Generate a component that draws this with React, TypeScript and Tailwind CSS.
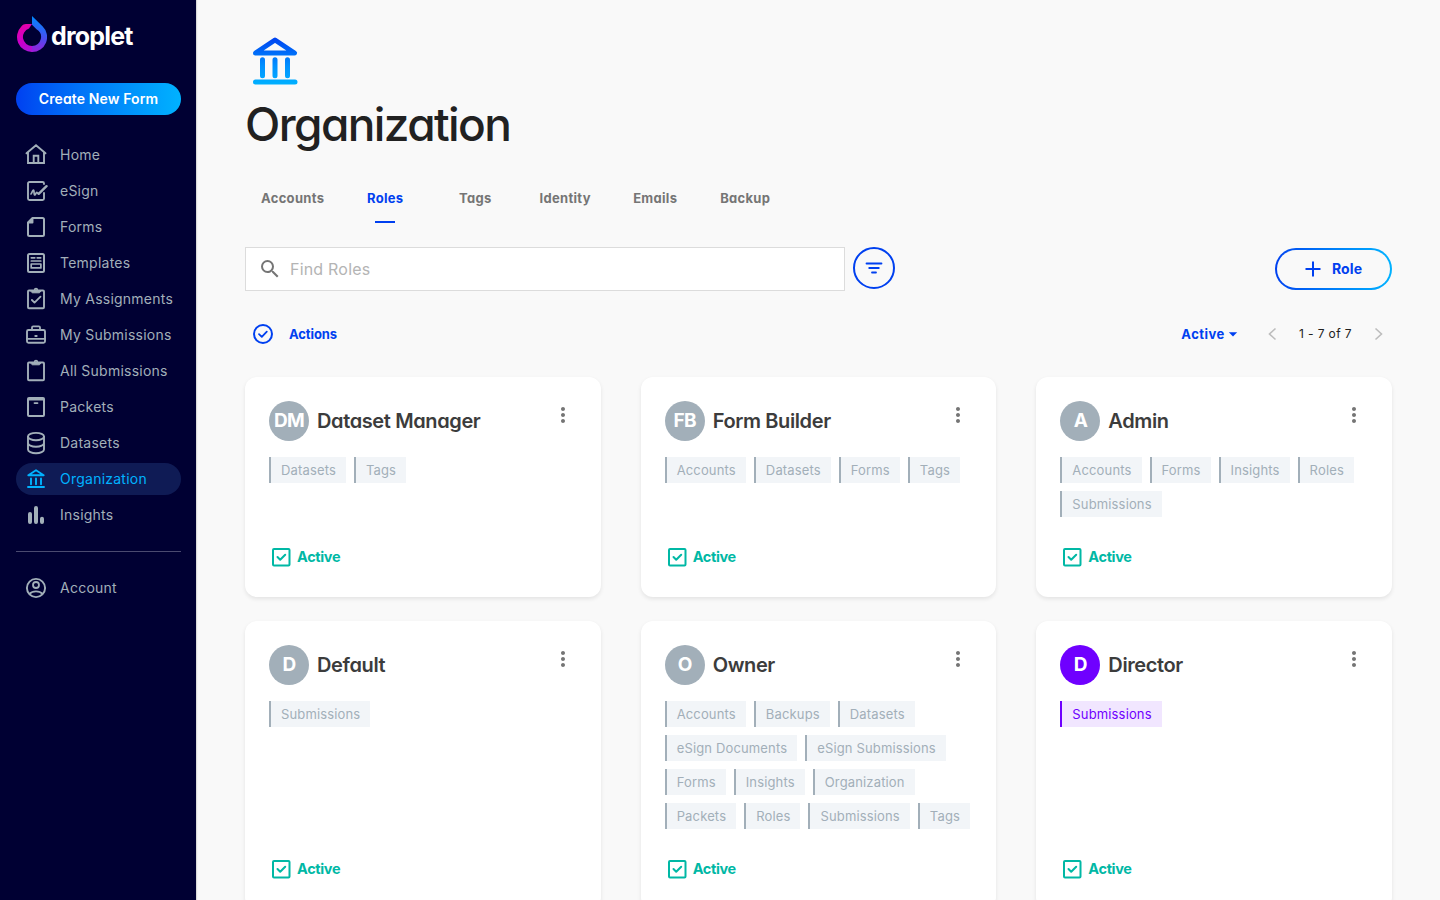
import type { ReactNode } from 'react';
import { MdSearch, MdArrowDropDown, MdMoreVert } from 'react-icons/md';

const geo = "[font-feature-settings:'cv11']";

function Icon({ children }: { children: ReactNode }) {
  return (
    <svg
      viewBox="0 0 24 24"
      className="size-6 shrink-0"
      fill="none"
      stroke="currentColor"
      strokeWidth="2"
      strokeLinecap="round"
      strokeLinejoin="round"
    >
      {children}
    </svg>
  );
}

const clipboard = (
  <>
    <rect x="4" y="3.500" width="16" height="17.800" rx="1" strokeWidth="1.900" />
    <path d="M7 3.800h10L15.500 5.800h-7z" fill="currentColor" strokeWidth="1" />
    <circle cx="12" cy="3" r="1.400" strokeWidth="1.600" />
  </>
);

const icons: Record<string, ReactNode> = {
  Home: (
    <path
      d="M2.500 10.300 12 2.300l9.500 8M4 9.300V20h16V9.300M9.700 20v-7.200h4.600V20"
      strokeWidth="1.900"
      strokeLinejoin="miter"
    />
  ),
  eSign: (
    <>
      <path d="M20 5V4.500A1.500 1.500 0 0 0 18.500 3h-13A1.500 1.500 0 0 0 4 4.500v15A1.500 1.500 0 0 0 5.500 21h13a1.500 1.500 0 0 0 1.500-1.500V14" strokeWidth="1.900" />
      <path d="M7 15c1-1 1.600-4 2.500-4s.2 5 1.200 5 1.200-2.600 2-2.600.6 1.400 1.800 1" strokeWidth="1.700" />
      <path d="M14.700 14.800 22.500 7.200" strokeWidth="2.400" />
    </>
  ),
  Forms: (
    <>
      <path d="M8.500 3h10A1.500 1.500 0 0 1 20 4.500v15a1.500 1.500 0 0 1-1.500 1.500h-13A1.500 1.500 0 0 1 4 19.500V7.500z" strokeWidth="2" />
      <path d="M4.800 7.500h3.700V3.800z" strokeWidth="1.900" />
    </>
  ),
  Templates: (
    <>
      <rect x="4" y="3" width="16" height="18" rx="1.500" strokeWidth="2" />
      <path d="M7.300 6.800h3.500M13.200 6.800h3.500M7.300 10h9.500" strokeWidth="1.700" />
      <rect x="7.200" y="13" width="9.700" height="3.900" strokeWidth="1.700" />
    </>
  ),
  'My Assignments': (
    <>
      {clipboard}
      <path d="m7.900 13 2.600 2.600 6-6" strokeWidth="1.800" />
    </>
  ),
  'My Submissions': (
    <>
      <rect x="3" y="7" width="18" height="12.800" rx="1.500" strokeWidth="1.900" />
      <path d="M8 7V4.500A1.200 1.200 0 0 1 9.200 3.300h5.600A1.200 1.200 0 0 1 16 4.500V7M3 15.800h18" strokeWidth="1.800" />
      <path d="M11.300 13h1.400" strokeWidth="1.900" />
    </>
  ),
  'All Submissions': clipboard,
  Packets: (
    <>
      <rect x="4" y="3" width="16" height="18" rx="1" strokeWidth="2" />
      <path d="M4.500 4.500h15" />
      <path d="M10.500 8.100h3" strokeWidth="1.800" />
    </>
  ),
  Datasets: (
    <>
      <ellipse cx="12" cy="5.600" rx="8" ry="3.700" strokeWidth="1.900" />
      <path
        d="M4 5.600v12.900c0 2.100 3.600 3.800 8 3.800s8-1.700 8-3.800V5.600M4 12c0 2 3.600 3.700 8 3.700s8-1.700 8-3.700"
        strokeWidth="1.900"
      />
    </>
  ),
  Organization: (
    <path d="M4.300 8.200 12 3.300l7.700 4.900zM7 11.500v5.800M12 11.500v5.800M17 11.500v5.800M4 20h16" strokeWidth="1.900" />
  ),
  Insights: <path d="M6 11v8M12 5v14M18 15.700V19" strokeWidth="4" />,
  Account: (
    <>
      <circle cx="12" cy="12" r="9.100" strokeWidth="1.900" />
      <circle cx="12" cy="9" r="3" strokeWidth="1.800" />
      <path d="M5.800 17.600c1.300-1.500 3.500-2.300 6.200-2.300s4.900.8 6.200 2.300" strokeWidth="1.800" />
    </>
  ),
};

const nav = [
  'Home',
  'eSign',
  'Forms',
  'Templates',
  'My Assignments',
  'My Submissions',
  'All Submissions',
  'Packets',
  'Datasets',
  'Organization',
  'Insights',
];

function NavItem({ label, active }: { label: string; active?: boolean }) {
  return (
    <a
      className={`flex h-8 items-center gap-3 rounded-full pl-2 text-sm tracking-[0.24px] whitespace-nowrap ${
        active ? 'bg-[#0f1b55] text-[#00b2ff]' : 'text-[#a2afb9]'
      }`}
    >
      <Icon>{icons[label]}</Icon>
      {label}
    </a>
  );
}

function Logo() {
  return (
    <div className="flex h-9 items-center gap-1 pl-px">
      <svg viewBox="0 0 30 36" className="h-9 w-[30px]">
        <defs>
          <linearGradient id="drop" x1="20" y1="2" x2="10" y2="36" gradientUnits="userSpaceOnUse">
            <stop offset="0" stopColor="#0088ff" />
            <stop offset=".5" stopColor="#4a4cf0" />
            <stop offset="1" stopColor="#a818d8" />
          </linearGradient>
          <linearGradient id="ring" x1="6" y1="8" x2="16" y2="36" gradientUnits="userSpaceOnUse">
            <stop offset="0" stopColor="#e600a8" />
            <stop offset=".6" stopColor="#c800cc" />
            <stop offset="1" stopColor="#a818d8" />
          </linearGradient>
        </defs>
        <path d="M15.200 36A15 15 0 0 1 4.300 10.500C6 8.700 7 8 9 8h6l-3 4.500A9 9 0 0 0 15.200 30z" fill="url(#ring)" />
        <path d="M15 0l10.500 10.200A15 15 0 0 1 15 36v-6a9 9 0 0 0 4.500-16.800L15 8.800z" fill="url(#drop)" />
      </svg>
      <span className={`mt-1 text-[25px] leading-9 font-bold tracking-[-0.8px] text-white ${geo}`}>droplet</span>
    </div>
  );
}

function Sidebar() {
  return (
    <aside className="flex w-[196px] shrink-0 flex-col bg-[#000033] pt-4 pr-[15px] pl-4 shadow-[1px_0_1px_rgba(0,0,0,0.12)]">
      <Logo />
      <button
        className={`mt-[31px] h-8 shrink-0 rounded-full bg-linear-to-r from-[#0040f0] to-[#00b2ff] text-sm font-semibold tracking-[0.1px] text-white ${geo}`}
      >
        Create New Form
      </button>
      <nav className="mt-6 flex flex-col gap-1">
        {nav.map((n) => (
          <NavItem key={n} label={n} active={n === 'Organization'} />
        ))}
      </nav>
      <hr className="mt-5 mb-5 border-[#4a4a70]" />
      <NavItem label="Account" />
    </aside>
  );
}

type Role = { initials: string; name: string; tags: string[]; purple?: boolean };

const roles: Role[] = [
  { initials: 'DM', name: 'Dataset Manager', tags: ['Datasets', 'Tags'] },
  { initials: 'FB', name: 'Form Builder', tags: ['Accounts', 'Datasets', 'Forms', 'Tags'] },
  { initials: 'A', name: 'Admin', tags: ['Accounts', 'Forms', 'Insights', 'Roles', 'Submissions'] },
  { initials: 'D', name: 'Default', tags: ['Submissions'] },
  {
    initials: 'O',
    name: 'Owner',
    tags: [
      'Accounts',
      'Backups',
      'Datasets',
      'eSign Documents',
      'eSign Submissions',
      'Forms',
      'Insights',
      'Organization',
      'Packets',
      'Roles',
      'Submissions',
      'Tags',
    ],
  },
  { initials: 'D', name: 'Director', tags: ['Submissions'], purple: true },
];

function RoleCard({ role }: { role: Role }) {
  return (
    <article className="flex flex-col rounded-xl bg-white p-6 shadow-[0_2px_4px_rgba(0,0,0,0.09)]">
      <header className="flex items-start">
        <span
          className={`flex size-10 shrink-0 items-center justify-center rounded-full pt-px text-[19px] font-bold tracking-[-0.8px] text-white ${geo} ${
            role.purple ? 'bg-[#6f00ff]' : 'bg-[#a2afb9]'
          }`}
        >
          {role.initials}
        </span>
        <h2 className={`ml-2 flex-1 text-xl leading-10 font-semibold tracking-[-0.38px] text-[#3c3c3c] ${geo}`}>
          {role.name}
        </h2>
        <MdMoreVert className="mt-0.5 mr-0.5 size-6 text-[#757575]" />
      </header>
      <div className="mt-4 flex flex-wrap gap-2">
        {role.tags.map((t) => (
          <span
            key={t}
            className={`h-[26px] border-l-2 px-2.5 text-[13px] leading-[26px] tracking-[0.15px] ${
              role.purple
                ? 'border-[#6f00ff] bg-[#f1e6ff] text-[#6f00ff]'
                : 'border-[#a2afb9] bg-[#f2f5f8] text-[#a2afb9]'
            }`}
          >
            {t}
          </span>
        ))}
      </div>
      <div className={`mt-auto mb-1 flex items-center gap-1 text-[14.5px] leading-6 font-bold tracking-[-0.35px] text-[#00b8a5] ${geo}`}>
        <Icon>
          <rect x="4" y="4" width="16.500" height="16.500" rx="1" />
          <path d="m8.500 12 2.700 2.700 5-5" />
        </Icon>
        Active
      </div>
    </article>
  );
}

function Toolbar() {
  return (
    <div className="mt-6 flex h-11 items-start">
      <label className="flex h-11 w-[600px] items-center border border-[#dcdcdc] bg-white pl-3">
        <MdSearch className="size-6 text-[#757575]" />
        <input
          placeholder="Find Roles"
          className="ml-2 flex-1 text-base tracking-[0.2px] outline-none placeholder:text-[#b4b4b4]"
        />
      </label>
      <button className="ml-2 flex size-[42px] items-center justify-center rounded-full border-2 border-[#0040f0] text-[#0040f0]">
        <Icon>
          <path d="M4.500 7.500h15M7.200 12h9.600M10 16.500h4" strokeWidth="1.800" />
        </Icon>
      </button>
      <div className="mt-px ml-auto h-[42px] w-[117px] rounded-full bg-linear-to-r from-[#0040f0] to-[#00b2ff] p-0.5">
        <button
          className={`flex size-full items-center rounded-full bg-[#f9f9f9] pl-6 text-sm font-bold tracking-[0.1px] text-[#0040f0] ${geo}`}
        >
          <Icon>
            <path d="M12 4.500v15M4.500 12h15" strokeLinecap="butt" />
          </Icon>
          <span className="ml-[7px]">Role</span>
        </button>
      </div>
    </div>
  );
}

const tabs = ['Accounts', 'Roles', 'Tags', 'Identity', 'Emails', 'Backup'];

export default function App() {
  return (
    <div className="flex h-[900px] w-[1440px] overflow-hidden bg-[#f9f9f9] font-['Inter',sans-serif]">
      <Sidebar />
      <main className="min-w-0 flex-1 pt-[31px] pr-12 pl-[49px]">
        <svg viewBox="0 0 60 60" className="size-[60px]" fill="none" strokeWidth="5" strokeLinecap="round" strokeLinejoin="round">
          <defs>
            <linearGradient id="bank" x1="30" y1="6" x2="30" y2="54" gradientUnits="userSpaceOnUse">
              <stop offset="0" stopColor="#0040f0" />
              <stop offset=".6" stopColor="#0090ff" />
              <stop offset="1" stopColor="#00b2ff" />
            </linearGradient>
          </defs>
          <path
            stroke="url(#bank)"
            d="M10.500 22 30 9l19.500 13zM17.500 28.800v16M30 28.800v16M42.500 28.800v16M10.500 51h39.500"
          />
        </svg>
        <h1 className={`-mt-px text-[46px] leading-[68px] font-medium tracking-[-1.6px] text-[#212121] ${geo}`}>Organization</h1>
        <nav className={`mt-[17px] flex h-12 text-[13px] font-bold tracking-[0.3px] text-[#757575] ${geo}`}>
          {tabs.map((t) => (
            <a
              key={t}
              className={`flex min-w-[90px] flex-col items-center justify-between px-4 pt-3.5 leading-[18px] ${
                t === 'Roles' ? 'text-[#0040f0]' : ''
              }`}
            >
              {t}
              {t === 'Roles' && <span className="h-0.5 w-5 bg-[#0040f0]" />}
            </a>
          ))}
        </nav>
        <Toolbar />
        <div className="mt-[31px] flex h-6 items-center text-[#0040f0]">
          <span className={`ml-1.5 flex items-center gap-3.5 text-[13px] font-bold tracking-[-0.1px] ${geo}`}>
            <Icon>
              <circle cx="12" cy="12" r="9" />
              <path d="m8 12.200 2.800 2.700 5-5.200" strokeWidth="1.800" />
            </Icon>
            <span className="pt-px">Actions</span>
          </span>
          <span className="ml-auto flex items-center text-[13px] font-bold tracking-[0.5px]">
            <span className="pt-px">Active</span>
            <MdArrowDropDown className="-ml-0.5 size-5" />
          </span>
          <svg viewBox="0 0 24 24" className="ml-[17px] size-6" fill="none" stroke="#bdbdbd" strokeWidth="1.600">
            <path d="M15.500 6.500 9.500 12l6 5.500" />
          </svg>
          <span className="mr-[14px] ml-[15px] text-xs tracking-[0.4px] text-[#212121]">1 - 7 of 7</span>
          <svg viewBox="0 0 24 24" className="mr-0.5 size-6" fill="none" stroke="#bdbdbd" strokeWidth="1.600">
            <path d="m9.500 6.500 6 5.500-6 5.500" />
          </svg>
        </div>
        <section className="mt-[31px] grid auto-rows-[288px] grid-cols-3 grid-rows-[220px] gap-x-10 gap-y-6">
          {roles.map((r) => (
            <RoleCard key={r.name} role={r} />
          ))}
        </section>
      </main>
    </div>
  );
}
